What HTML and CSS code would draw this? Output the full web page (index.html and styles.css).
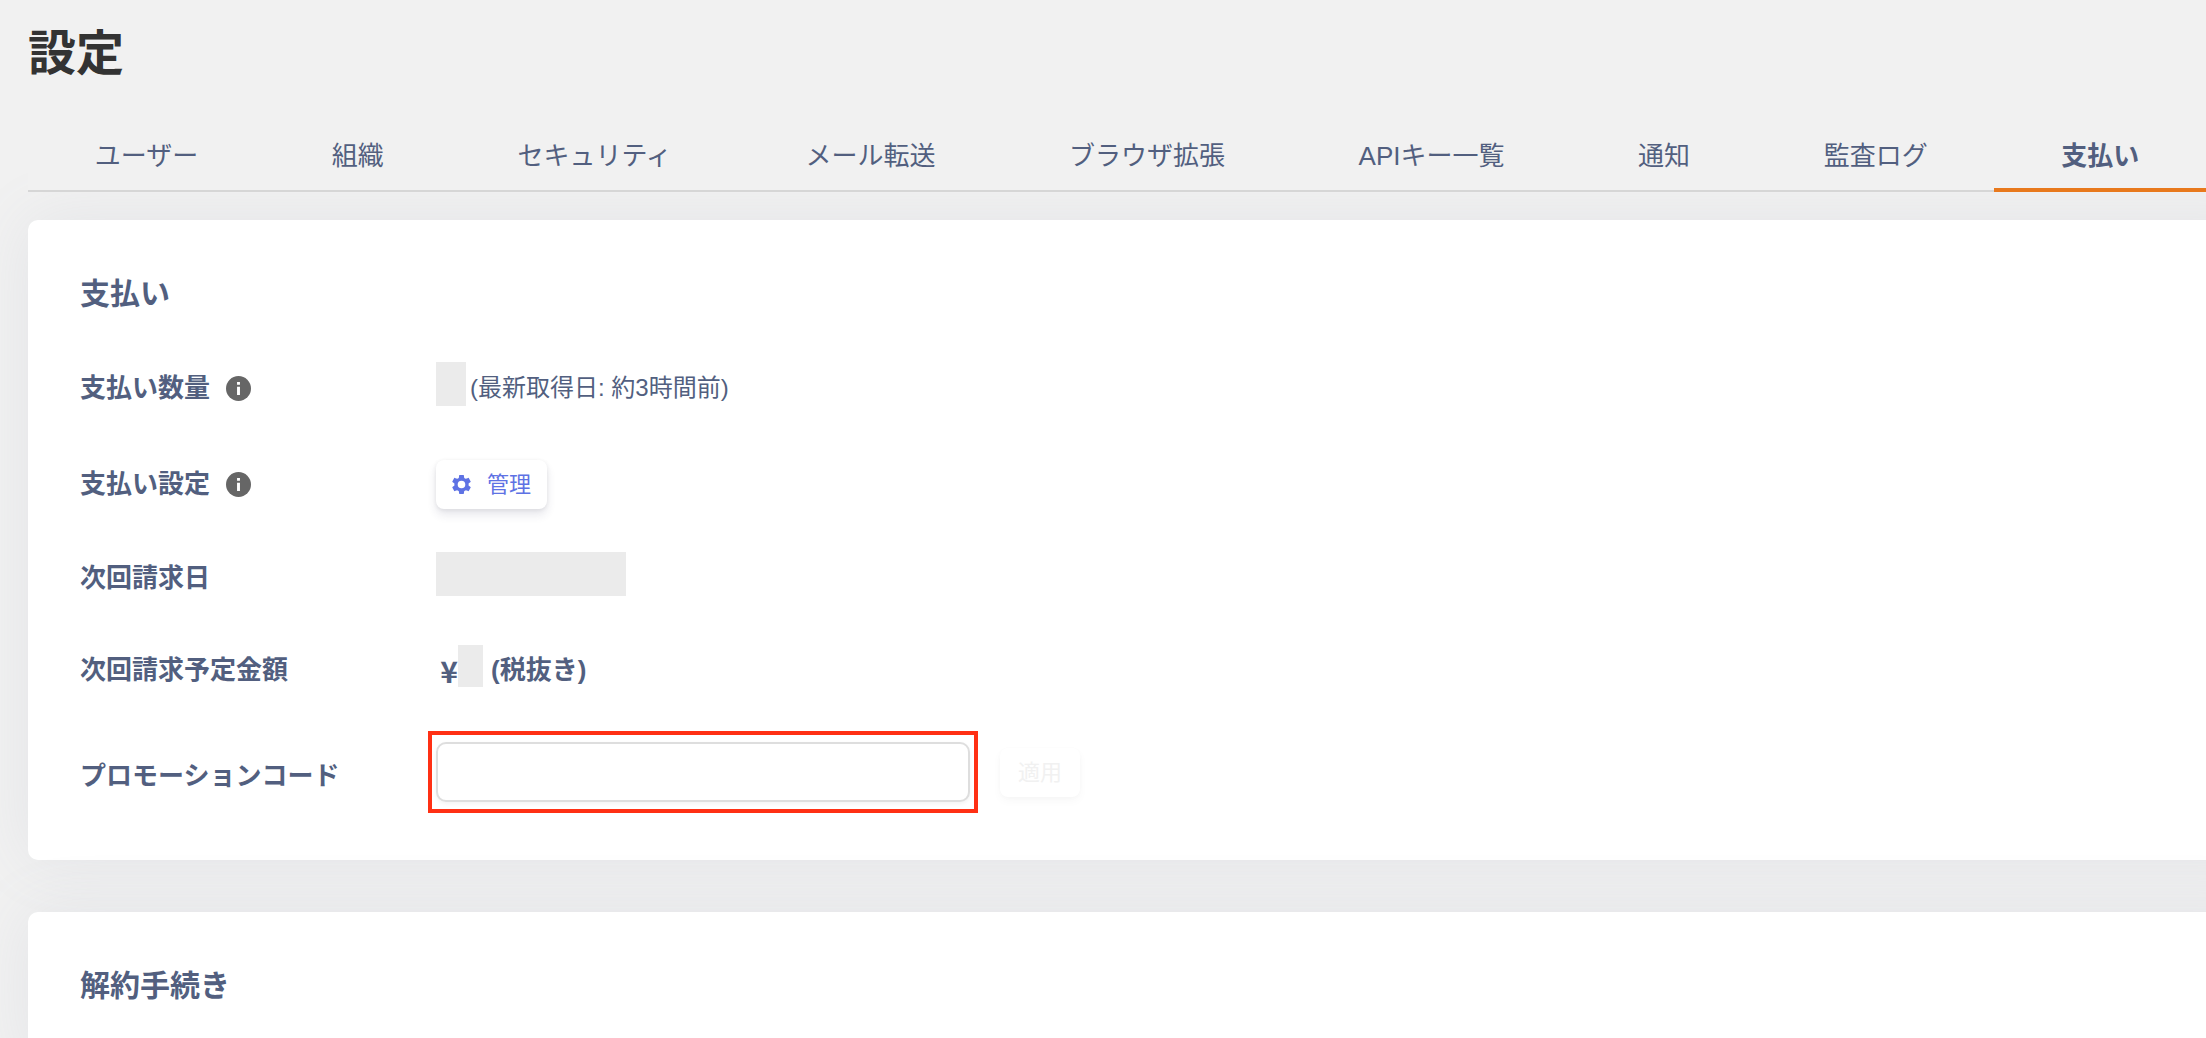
FILE: index.html
```html
<!DOCTYPE html>
<html lang="ja">
<head>
<meta charset="utf-8">
<title>設定</title>
<meta name="viewport" content="width=device-width, initial-scale=1">
<link rel="stylesheet" href="styles.css">
</head>
<body>
<svg class="sprite" aria-hidden="true">
  <symbol id="icon-info" viewBox="0 0 24 24">
    <circle cx="12" cy="12" r="12" fill="#666"/>
    <path d="M10.6 5.8h2.8v2.6h-2.8zM10.6 10.4h2.8v7.8h-2.8z" fill="#fff"/>
  </symbol>
  <symbol id="icon-gear" viewBox="2 2 20 20">
    <path fill="currentColor" d="M19.43 12.98c.04-.32.07-.64.07-.98s-.03-.66-.07-.98l2.11-1.65c.19-.15.24-.42.12-.64l-2-3.46c-.12-.22-.39-.3-.61-.22l-2.49 1c-.52-.4-1.08-.73-1.69-.98l-.38-2.65C14.46 2.18 14.25 2 14 2h-4c-.25 0-.46.18-.49.42l-.38 2.65c-.61.25-1.17.59-1.69.98l-2.49-1c-.23-.09-.49 0-.61.22l-2 3.46c-.13.22-.07.49.12.64l2.11 1.65c-.04.32-.07.65-.07.98s.03.66.07.98l-2.11 1.65c-.19.15-.24.42-.12.64l2 3.46c.12.22.39.3.61.22l2.49-1c.52.4 1.08.73 1.69.98l.38 2.65c.03.24.24.42.49.42h4c.25 0 .46-.18.49-.42l.38-2.65c.61-.25 1.17-.59 1.69-.98l2.49 1c.23.09.49 0 .61-.22l2-3.46c.12-.22.07-.49-.12-.64l-2.11-1.65zM12 16a4 4 0 1 1 0-8 4 4 0 0 1 0 8z"/>
  </symbol>
</svg>

<main class="page">
  <h1 class="page-title">設定</h1>

  <nav class="tabs">
    <a class="tab" href="#user">ユーザー</a>
    <a class="tab" href="#organization">組織</a>
    <a class="tab" href="#security">セキュリティ</a>
    <a class="tab" href="#mail">メール転送</a>
    <a class="tab" href="#extension">ブラウザ拡張</a>
    <a class="tab" href="#api-keys">APIキー一覧</a>
    <a class="tab" href="#notification">通知</a>
    <a class="tab" href="#audit-log">監査ログ</a>
    <a class="tab tab-active" href="#billing" aria-current="page">支払い</a>
  </nav>

  <section class="card" id="billing">
    <h2 class="card-title">支払い</h2>
    <div class="row">
      <div class="label">支払い数量 <svg class="info"><use href="#icon-info"/></svg></div>
      <div class="value">
        <span class="mask mask-count"></span>
        <span class="note">(最新取得日: 約3時間前)</span>
      </div>
    </div>
    <div class="row">
      <div class="label">支払い設定 <svg class="info"><use href="#icon-info"/></svg></div>
      <div class="value">
        <button class="button" type="button"><svg class="gear"><use href="#icon-gear"/></svg>管理</button>
      </div>
    </div>
    <div class="row row-text">
      <div class="label">次回請求日</div>
      <div class="value"><span class="mask mask-date"></span></div>
    </div>
    <div class="row row-text">
      <div class="label">次回請求予定金額</div>
      <div class="value amount"><span class="yen">¥</span><span class="mask mask-amount"></span><span>(税抜き)</span></div>
    </div>
    <form class="row row-form">
      <label class="label" for="promo">プロモーションコード</label>
      <div class="value">
        <div class="highlight"><input class="input" id="promo" type="text"></div>
        <button class="button" type="button" disabled>適用</button>
      </div>
    </form>
  </section>

  <section class="card">
    <h2 class="card-title">解約手続き</h2>
  </section>
</main>
</body>
</html>
```
FILE: styles.css
```css
* {
  box-sizing: border-box;
}

body {
  margin: 0;
  background: #f1f1f1;
  color: #525f7f;
  font-family: "Liberation Sans", "Noto Sans CJK JP", sans-serif;
  font-size: 26px;
  line-height: 40px;
}

.sprite {
  display: none;
}

.page {
  padding: 18px 0 0 28px;
  overflow: hidden;
}

.page-title {
  margin: 0;
  color: #333;
  font-size: 48px;
  line-height: 72px;
}

.tabs {
  position: relative;
  z-index: 1;
  display: flex;
  margin: 32px 0 28px;
  background: #f1f1f1;
  box-shadow: inset 0 -2px #d6d6d6;
}

.tab {
  flex: 1 1 auto;
  padding: 16px 0 14px;
  border-bottom: 4px solid transparent;
  color: #525f7f;
  line-height: 36px;
  text-align: center;
  text-decoration: none;
  white-space: nowrap;
}

.tab-active {
  border-color: #e8791d;
  font-weight: bold;
}

/* Cards bleed off the right edge of the page */
.card {
  margin: 0 -64px 52px 0;
  padding: 52px 64px 32px 52px;
  border-radius: 10px;
  background: #fff;
  box-shadow: 0 0 64px rgba(136, 152, 170, 0.12);
}

.card:last-child {
  margin-bottom: 0;
}

.card-title {
  margin: 0 0 24px;
  font-size: 30px;
  line-height: 44px;
}

.row {
  display: grid;
  grid-template-columns: 356px 1fr;
  align-items: center;
  min-height: 96px;
}

.row-text {
  min-height: 92px;
}

.row-form {
  min-height: 112px;
}

.row-form .label {
  padding-top: 8px;
}

.label {
  display: flex;
  align-items: center;
  gap: 16px;
  font-weight: bold;
}

.info {
  width: 25px;
  height: 25px;
}

.value {
  display: flex;
  align-items: center;
}

.mask {
  margin-bottom: 8px;
  background: #ebebeb;
}

.mask-count {
  width: 30px;
  height: 44px;
  margin-right: 4px;
}

.mask-date {
  width: 190px;
  height: 44px;
}

.mask-amount {
  width: 25px;
  height: 42px;
  margin-right: 8px;
}

.note {
  font-size: 24px;
}

.amount {
  font-weight: bold;
}

.yen {
  width: 22px;
  font-family: "Noto Sans CJK JP", sans-serif;
  font-size: 30px;
  text-align: right;
}

.button {
  display: flex;
  align-items: center;
  gap: 16px;
  padding: 8px 16px;
  border: 0;
  border-radius: 8px;
  background: #fff;
  box-shadow: 0 6px 10px rgba(50, 50, 93, 0.11), 0 1px 4px rgba(0, 0, 0, 0.08);
  color: #5e72e4;
  font: inherit;
  font-size: 22px;
  line-height: 33px;
}

.button:disabled {
  padding: 8px 18px;
  box-shadow: 0 4px 10px rgba(0, 0, 0, 0.03), 0 1px 4px rgba(0, 0, 0, 0.02);
  color: #f1f1f1;
}

.gear {
  width: 19px;
  height: 19px;
}

.highlight {
  width: 550px;
  margin: 0 22px 0 -8px;
  padding: 7px 4px;
  border: 4px solid #ff3014;
}

.input {
  display: block;
  width: 100%;
  height: 60px;
  padding: 0 16px;
  border: 2px solid #dedede;
  border-radius: 10px;
  background: #fff;
  box-shadow: 0 2px 4px rgba(0, 0, 0, 0.05);
  color: inherit;
  font: inherit;
}
```
